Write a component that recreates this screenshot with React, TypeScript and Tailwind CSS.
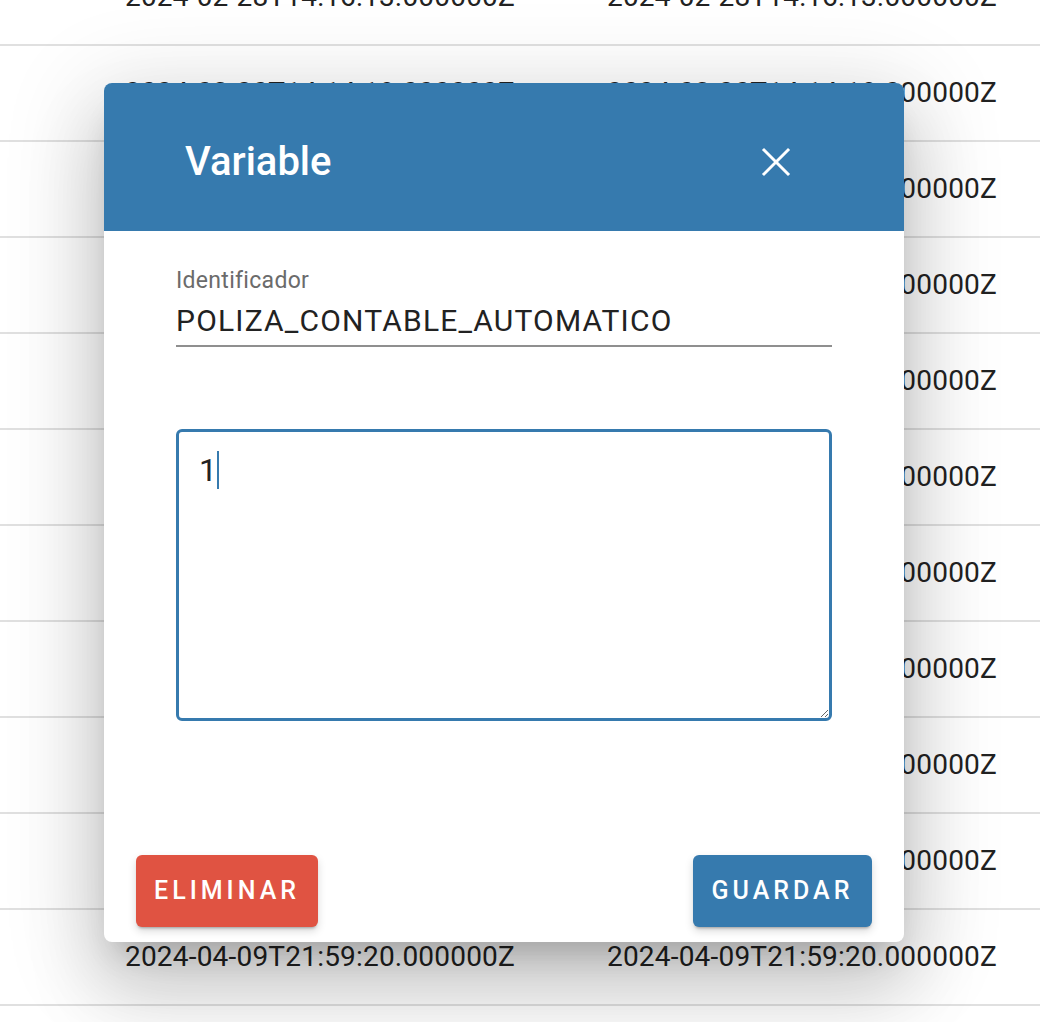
import { useState } from 'react'

const ROWS = [
  '2024-02-28T14:16:13.000000Z',
  '2024-03-20T14:14:18.000000Z',
  '2024-03-20T14:15:02.000000Z',
  '2024-03-20T14:16:40.000000Z',
  '2024-03-21T09:12:33.000000Z',
  '2024-03-21T09:14:05.000000Z',
  '2024-03-22T17:30:11.000000Z',
  '2024-03-25T11:02:47.000000Z',
  '2024-04-02T16:45:29.000000Z',
  '2024-04-05T10:21:56.000000Z',
  '2024-04-09T21:59:20.000000Z',
]

export default function App() {
  const [value, setValue] = useState('1')

  return (
    <div className="relative h-[1022px] w-[1040px] overflow-hidden bg-white font-['Roboto',sans-serif]">
      {/* Table behind */}
      <div className="mt-[-50px]">
        {ROWS.map((r, i) => (
          <div key={i} className="flex h-[96px] items-center border-b-2 border-[#e0e0e0] text-[28px] tracking-[0.2px] text-[#222]">
            <span className="ml-[125px] w-[482px]">{r}</span>
            <span>{r}</span>
          </div>
        ))}
      </div>

      {/* Dialog */}
      <div className="absolute left-[104px] top-[83px] flex h-[859px] w-[800px] flex-col overflow-hidden rounded-lg bg-white shadow-[0_22px_30px_-14px_rgba(0,0,0,0.2),0_48px_76px_6px_rgba(0,0,0,0.14),0_18px_92px_16px_rgba(0,0,0,0.12)]">
        <div className="flex h-[148px] shrink-0 items-center justify-between bg-[#367aae] pl-[81px] pr-[113px] pt-[10px]">
          <h2 className="text-[40px] font-medium text-white">Variable</h2>
          <button className="text-white">
            <svg width="30" height="30" viewBox="0 0 30 30" stroke="currentColor" strokeWidth="3" strokeLinecap="square">
              <path d="M3 3 L27 27 M27 3 L3 27" />
            </svg>
          </button>
        </div>

        <div className="flex flex-1 flex-col px-[72px] pt-[38px]">
          <label className="text-[23px] leading-6 tracking-[0.3px] text-[#6b6b6b]">Identificador</label>
          <div className="mt-[12px] text-[30px] leading-8 tracking-[1.2px] text-[#222]">POLIZA_CONTABLE_AUTOMATICO</div>
          <div className="mt-[8px] h-[2px] bg-[#8f8f8f]" />

          <div className="relative mt-[82px]">
            <textarea
              autoFocus
              value={value}
              onChange={e => setValue(e.target.value)}
              className="block h-[292px] w-full rounded-md border-[3px] border-[#367aae] px-[20px] pt-[20px] text-[32px] leading-9 text-[#222] caret-[#367aae] outline-none"
            />
            <span className="pointer-events-none absolute left-[41px] top-[22px] h-[38px] w-[2px] bg-[#367aae]" />
          </div>
        </div>

        <div className="flex shrink-0 items-center justify-between px-[32px] pb-[15px]">
          <button className="h-[72px] w-[182px] rounded-md bg-[#e05342] text-[25px] font-medium tracking-[4px] text-white shadow-[0_3px_3px_-2px_rgba(0,0,0,0.3),0_4px_8px_0_rgba(0,0,0,0.15)]">
            ELIMINAR
          </button>
          <button className="h-[72px] w-[179px] rounded-md bg-[#367aae] text-[25px] font-medium tracking-[4px] text-white shadow-[0_3px_3px_-2px_rgba(0,0,0,0.3),0_4px_8px_0_rgba(0,0,0,0.15)]">
            GUARDAR
          </button>
        </div>
      </div>
    </div>
  )
}
